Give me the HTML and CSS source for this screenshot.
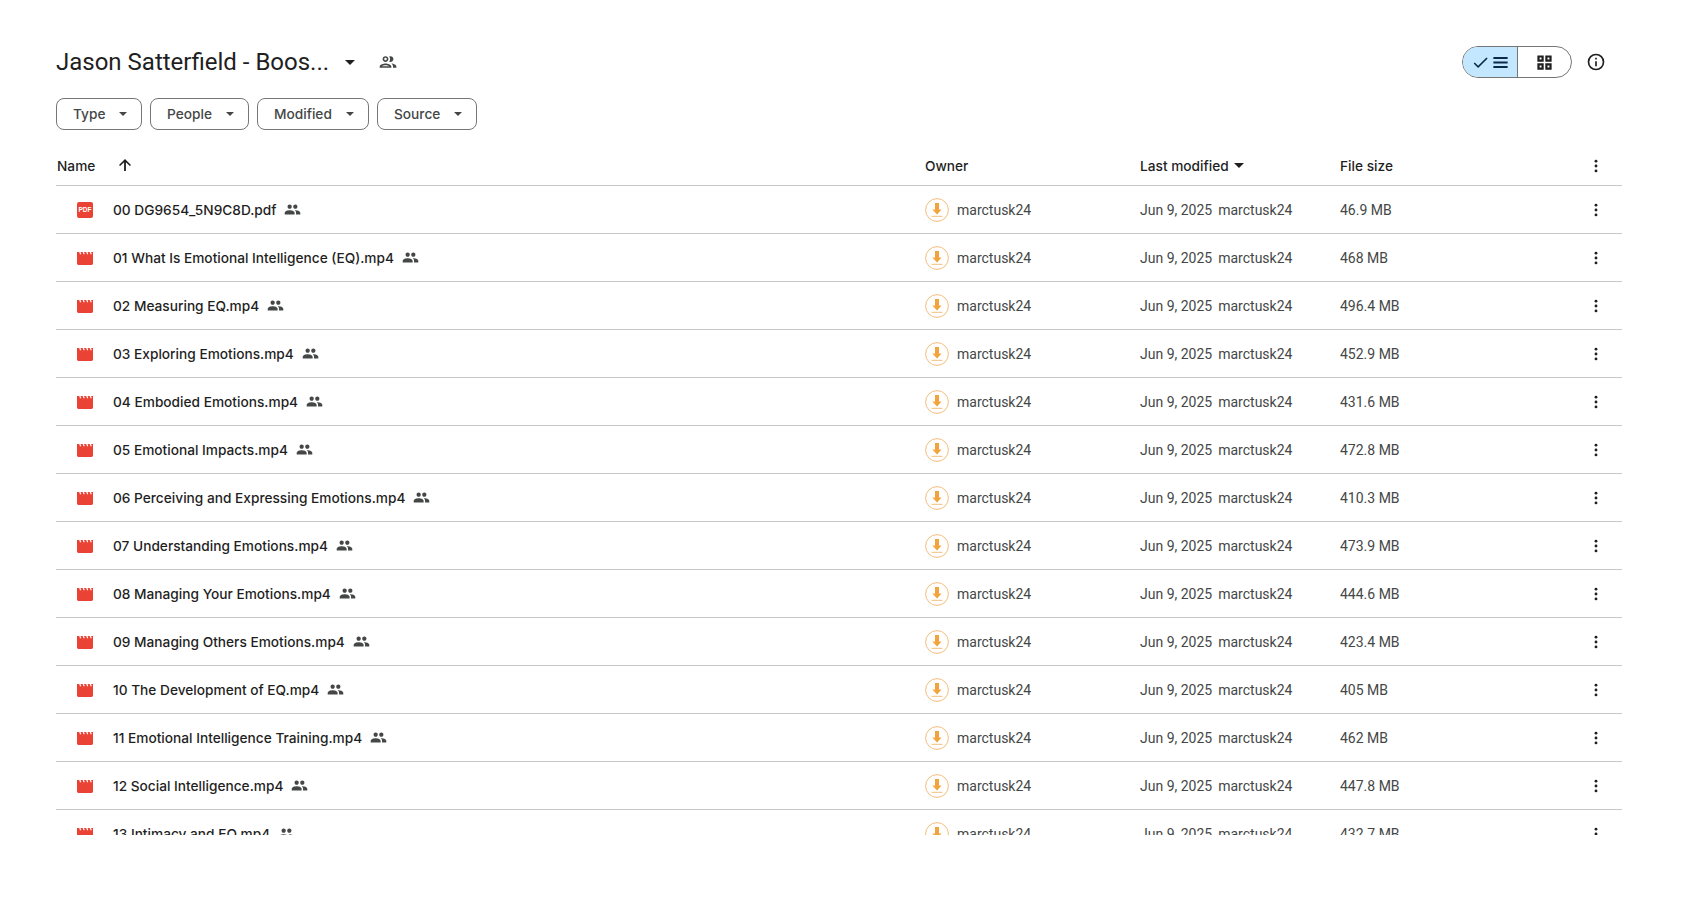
FILE: index.html
```html
<!DOCTYPE html>
<html lang="en">
<head>
<meta charset="utf-8">
<title>Jason Satterfield - Boost</title>
<link rel="stylesheet" href="styles.css">
</head>
<body>
<svg class="defs" width="0" height="0" aria-hidden="true">
  <symbol id="people" viewBox="0 0 24 24"><path d="M16 11c1.66 0 2.99-1.34 2.99-3S17.66 5 16 5c-1.66 0-3 1.34-3 3s1.34 3 3 3zm-8 0c1.66 0 2.99-1.34 2.99-3S9.66 5 8 5C6.34 5 5 6.34 5 8s1.34 3 3 3zm0 2c-2.33 0-7 1.17-7 3.5V19h14v-2.5c0-2.33-4.67-3.5-7-3.5zm8 0c-.29 0-.62.02-.97.05 1.16.84 1.97 1.97 1.97 3.45V19h6v-2.5c0-2.33-4.67-3.5-7-3.5z"/></symbol>
  <symbol id="dots" viewBox="0 0 24 24"><circle cx="12" cy="5.500" r="1.900"/><circle cx="12" cy="12" r="1.900"/><circle cx="12" cy="18.500" r="1.900"/></symbol>
  <symbol id="video" viewBox="0 0 18 18"><path fill="#ea4335" d="M1 3h16v11.500a1.400 1.400 0 0 1-1.400 1.400H2.400A1.400 1.400 0 0 1 1 14.500z"/><path fill="#fff" d="M3.200 3h1.300l.8 2.200H4zM6.700 3H8l.8 2.200H7.500zM10.200 3h1.300l.8 2.200H11zM13.700 3H15l.8 2.200h-1.300z"/></symbol>
  <symbol id="avatar" viewBox="0 0 24 24"><circle cx="12" cy="12" r="11.400" fill="#fff" stroke="#f4bd7a" stroke-width="1"/><path fill="#f3a33c" d="M10 5h4v6.500h2.600L12 16.400 7.400 11.500H10z"/><rect x="6.500" y="17.800" width="11" height="1" fill="#f4bd7a"/></symbol>
</svg>
<main class="page">
  <header class="top">
    <div class="title-wrap">
      <h1 class="title">Jason Satterfield - Boos...</h1>
      <span class="caret caret-title"></span>
      <svg class="shared" viewBox="0 0 24 24"><path d="M9 13.750c-2.340 0-7 1.170-7 3.500V19h14v-1.750c0-2.330-4.660-3.500-7-3.500zM4.340 17c.84-.58 2.870-1.250 4.660-1.250s3.820.67 4.660 1.250H4.340zM9 12c1.930 0 3.500-1.570 3.500-3.500S10.930 5 9 5 5.500 6.570 5.500 8.500 7.070 12 9 12zm0-5c.83 0 1.500.67 1.500 1.500S9.830 10 9 10s-1.500-.67-1.500-1.500S8.170 7 9 7zm7.040 6.810c1.160.84 1.960 1.960 1.960 3.440V19h4v-1.750c0-2.020-3.500-3.170-5.960-3.440zM15 12c1.930 0 3.500-1.570 3.500-3.500S16.930 5 15 5c-.54 0-1.040.13-1.500.35.63.89 1 1.980 1 3.150s-.37 2.260-1 3.150c.46.22.96.35 1.500.35z"/></svg>
    </div>
    <div class="view-tools">
      <div class="toggle">
        <div class="toggle-on">
          <svg class="ic-check" viewBox="0 0 24 24"><path fill="#0b2a4a" d="M9 16.200 4.800 12l-1.400 1.400L9 19 21 7l-1.400-1.400z"/></svg>
          <svg class="ic-list" viewBox="0 0 24 24"><path fill="#0b2a4a" d="M3 19h18v-2.600H3zm0-5.700h18v-2.600H3zM3 5v2.600h18V5z"/></svg>
        </div>
        <div class="toggle-off">
          <svg class="ic-grid" viewBox="0 0 24 24"><path fill="#1f1f1f" d="M3 3h8v8H3zm2.800 2.800v2.400h2.400V5.800zM13 3h8v8h-8zm2.800 2.800v2.400h2.400V5.800zM3 13h8v8H3zm2.800 2.800v2.400h2.400v-2.400zM13 13h8v8h-8zm2.800 2.800v2.400h2.400v-2.400z"/></svg>
        </div>
      </div>
      <svg class="info" viewBox="0 0 24 24"><path fill="#1f1f1f" d="M11 7h2v2h-2zm0 4h2v6h-2zm1-9a10 10 0 1 0 0 20 10 10 0 0 0 0-20zm0 18a8 8 0 1 1 0-16 8 8 0 0 1 0 16z"/></svg>
    </div>
  </header>
  <div class="chips">
    <div class="chip chip-type">Type<span class="caret"></span></div>
    <div class="chip chip-people">People<span class="caret"></span></div>
    <div class="chip chip-modified">Modified<span class="caret"></span></div>
    <div class="chip chip-source">Source<span class="caret"></span></div>
  </div>
  <div class="list">
    <div class="row head">
      <div class="name-head">Name<svg class="arrow" viewBox="0 0 24 24"><path d="M4 12l1.410 1.410L10.800 8.200V20h2.400V8.200l5.380 5.220L20 12l-8-8z"/></svg></div>
      <div>Owner</div>
      <div class="mod-head">Last modified<span class="caret caret-dark"></span></div>
      <div>File size</div>
      <svg class="dots"><use href="#dots"/></svg>
    </div>
    <div class="row"><div class="name"><svg class="file" viewBox="0 0 18 18"><rect x="1" y="1" width="16" height="16" rx="2" fill="#ea4335"/><text class="pdf" x="9" y="11.300" text-anchor="middle">PDF</text></svg><span>00 DG9654_5N9C8D.pdf</span><svg class="people"><use href="#people"/></svg></div><div class="owner"><svg class="avatar"><use href="#avatar"/></svg>marctusk24</div><div class="mod"><span>Jun 9, 2025</span><span>marctusk24</span></div><div class="size">46.9 MB</div><svg class="dots"><use href="#dots"/></svg></div>
    <div class="row"><div class="name"><svg class="file"><use href="#video"/></svg><span>01 What Is Emotional Intelligence (EQ).mp4</span><svg class="people"><use href="#people"/></svg></div><div class="owner"><svg class="avatar"><use href="#avatar"/></svg>marctusk24</div><div class="mod"><span>Jun 9, 2025</span><span>marctusk24</span></div><div class="size">468 MB</div><svg class="dots"><use href="#dots"/></svg></div>
    <div class="row"><div class="name"><svg class="file"><use href="#video"/></svg><span>02 Measuring EQ.mp4</span><svg class="people"><use href="#people"/></svg></div><div class="owner"><svg class="avatar"><use href="#avatar"/></svg>marctusk24</div><div class="mod"><span>Jun 9, 2025</span><span>marctusk24</span></div><div class="size">496.4 MB</div><svg class="dots"><use href="#dots"/></svg></div>
    <div class="row"><div class="name"><svg class="file"><use href="#video"/></svg><span>03 Exploring Emotions.mp4</span><svg class="people"><use href="#people"/></svg></div><div class="owner"><svg class="avatar"><use href="#avatar"/></svg>marctusk24</div><div class="mod"><span>Jun 9, 2025</span><span>marctusk24</span></div><div class="size">452.9 MB</div><svg class="dots"><use href="#dots"/></svg></div>
    <div class="row"><div class="name"><svg class="file"><use href="#video"/></svg><span>04 Embodied Emotions.mp4</span><svg class="people"><use href="#people"/></svg></div><div class="owner"><svg class="avatar"><use href="#avatar"/></svg>marctusk24</div><div class="mod"><span>Jun 9, 2025</span><span>marctusk24</span></div><div class="size">431.6 MB</div><svg class="dots"><use href="#dots"/></svg></div>
    <div class="row"><div class="name"><svg class="file"><use href="#video"/></svg><span>05 Emotional Impacts.mp4</span><svg class="people"><use href="#people"/></svg></div><div class="owner"><svg class="avatar"><use href="#avatar"/></svg>marctusk24</div><div class="mod"><span>Jun 9, 2025</span><span>marctusk24</span></div><div class="size">472.8 MB</div><svg class="dots"><use href="#dots"/></svg></div>
    <div class="row"><div class="name"><svg class="file"><use href="#video"/></svg><span>06 Perceiving and Expressing Emotions.mp4</span><svg class="people"><use href="#people"/></svg></div><div class="owner"><svg class="avatar"><use href="#avatar"/></svg>marctusk24</div><div class="mod"><span>Jun 9, 2025</span><span>marctusk24</span></div><div class="size">410.3 MB</div><svg class="dots"><use href="#dots"/></svg></div>
    <div class="row"><div class="name"><svg class="file"><use href="#video"/></svg><span>07 Understanding Emotions.mp4</span><svg class="people"><use href="#people"/></svg></div><div class="owner"><svg class="avatar"><use href="#avatar"/></svg>marctusk24</div><div class="mod"><span>Jun 9, 2025</span><span>marctusk24</span></div><div class="size">473.9 MB</div><svg class="dots"><use href="#dots"/></svg></div>
    <div class="row"><div class="name"><svg class="file"><use href="#video"/></svg><span>08 Managing Your Emotions.mp4</span><svg class="people"><use href="#people"/></svg></div><div class="owner"><svg class="avatar"><use href="#avatar"/></svg>marctusk24</div><div class="mod"><span>Jun 9, 2025</span><span>marctusk24</span></div><div class="size">444.6 MB</div><svg class="dots"><use href="#dots"/></svg></div>
    <div class="row"><div class="name"><svg class="file"><use href="#video"/></svg><span>09 Managing Others Emotions.mp4</span><svg class="people"><use href="#people"/></svg></div><div class="owner"><svg class="avatar"><use href="#avatar"/></svg>marctusk24</div><div class="mod"><span>Jun 9, 2025</span><span>marctusk24</span></div><div class="size">423.4 MB</div><svg class="dots"><use href="#dots"/></svg></div>
    <div class="row"><div class="name"><svg class="file"><use href="#video"/></svg><span>10 The Development of EQ.mp4</span><svg class="people"><use href="#people"/></svg></div><div class="owner"><svg class="avatar"><use href="#avatar"/></svg>marctusk24</div><div class="mod"><span>Jun 9, 2025</span><span>marctusk24</span></div><div class="size">405 MB</div><svg class="dots"><use href="#dots"/></svg></div>
    <div class="row"><div class="name"><svg class="file"><use href="#video"/></svg><span>11 Emotional Intelligence Training.mp4</span><svg class="people"><use href="#people"/></svg></div><div class="owner"><svg class="avatar"><use href="#avatar"/></svg>marctusk24</div><div class="mod"><span>Jun 9, 2025</span><span>marctusk24</span></div><div class="size">462 MB</div><svg class="dots"><use href="#dots"/></svg></div>
    <div class="row"><div class="name"><svg class="file"><use href="#video"/></svg><span>12 Social Intelligence.mp4</span><svg class="people"><use href="#people"/></svg></div><div class="owner"><svg class="avatar"><use href="#avatar"/></svg>marctusk24</div><div class="mod"><span>Jun 9, 2025</span><span>marctusk24</span></div><div class="size">447.8 MB</div><svg class="dots"><use href="#dots"/></svg></div>
    <div class="row"><div class="name"><svg class="file"><use href="#video"/></svg><span>13 Intimacy and EQ.mp4</span><svg class="people"><use href="#people"/></svg></div><div class="owner"><svg class="avatar"><use href="#avatar"/></svg>marctusk24</div><div class="mod"><span>Jun 9, 2025</span><span>marctusk24</span></div><div class="size">432.7 MB</div><svg class="dots"><use href="#dots"/></svg></div>
  </div>
</main>
</body>
</html>
```

FILE: styles.css
```css
* { box-sizing: border-box; }
html, body { margin: 0; background: #fff; height: 100%; overflow: hidden; }
body { font-family: Roboto, "Noto Sans", "Liberation Sans", sans-serif; color: #1f1f1f; font-size: 14px; }
.defs { position: absolute; }
.page { padding: 0 76px 0 56px; }
.top { height: 98px; display: flex; justify-content: space-between; align-items: flex-start; padding-top: 46px; padding-right: 16px; }
.title-wrap { display: flex; align-items: center; height: 32px; }
.title { margin: 0; font-size: 24px; font-weight: 400; line-height: 32px; color: #1f1f1f; width: 274px; white-space: nowrap; }
.caret { display: inline-block; width: 0; height: 0; border-left: 4px solid transparent; border-right: 4px solid transparent; border-top: 4px solid #444746; }
.caret-title { border-left-width: 5px; border-right-width: 5px; border-top-width: 5px; border-top-color: #1f1f1f; margin-left: 15px; }
.shared { width: 20px; height: 20px; margin-left: 23px; fill: #444746; }
.view-tools { display: flex; align-items: center; gap: 14px; }
.toggle { display: flex; width: 110px; height: 32px; border: 1px solid #747775; border-radius: 16px; overflow: hidden; }
.toggle-on { width: 55px; background: #c2e7ff; border-right: 1px solid #747775; display: flex; align-items: center; justify-content: center; padding-left: 1px; gap: 1px; }
.toggle-off { flex: 1; display: flex; align-items: center; justify-content: center; }
.ic-check, .ic-list { width: 19px; height: 19px; }
.ic-grid { width: 19px; height: 19px; }
.info { width: 20px; height: 20px; }
.chips { display: flex; gap: 8px; height: 32px; }
.chip { display: flex; align-items: center; justify-content: space-between; height: 32px; border: 1px solid #747775; border-radius: 8px; padding: 0 14px 0 16px; color: #444746; font-family: Inter, Roboto, sans-serif; font-size: 13.7px; font-weight: 500; }
.chip-type { width: 86px; }
.chip-people { width: 99px; }
.chip-modified { width: 112px; }
.chip-source { width: 100px; }
.list { margin-top: 8px; height: 697px; overflow: hidden; }
.row { display: grid; grid-template-columns: 869px 215px 200px 244px 24px; align-items: center; height: 48px; border-bottom: 1px solid #c7c7c7; padding-right: 14px; color: #444746; }
.head { color: #1f1f1f; font-family: Inter, Roboto, sans-serif; font-size: 13.7px; font-weight: 500; height: 48px; padding-left: 1px; padding-top: 8px; grid-template-columns: 868px 215px 200px 244px 24px; }
.name-head { display: flex; align-items: center; }
.arrow { width: 18px; height: 18px; margin-left: 21px; fill: #1f1f1f; margin-top: -2px; }
.mod-head { display: flex; align-items: center; gap: 5px; }
.caret-dark { border-left-width: 5px; border-right-width: 5px; border-top-width: 5px; border-top-color: #1f1f1f; }
.dots { width: 18px; height: 18px; fill: #1f1f1f; justify-self: center; }
.name { display: flex; align-items: center; padding-left: 20px; color: #1f1f1f; font-family: Inter, Roboto, sans-serif; font-size: 13.7px; font-weight: 500; white-space: nowrap; }
.file { width: 18px; height: 18px; margin-right: 19px; flex: none; }
.pdf { font: 700 6.500px "Liberation Sans", sans-serif; fill: #fff; }
.people { width: 17px; height: 17px; margin-left: 8px; fill: #444746; }
.owner { display: flex; align-items: center; gap: 8px; }
.avatar { width: 24px; height: 24px; }
.mod { display: flex; gap: 6px; }
```
